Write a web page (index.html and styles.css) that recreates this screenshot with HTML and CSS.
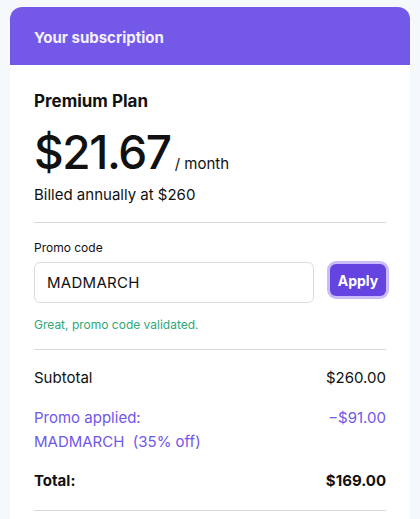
FILE: index.html
```html
<!DOCTYPE html>
<html lang="en">
<head>
  <meta charset="UTF-8">
  <meta name="viewport" content="width=device-width, initial-scale=1.0">
  <title>Your subscription</title>
  <link rel="stylesheet" href="styles.css">
</head>
<body>
  <div class="card">
    <div class="card-header">Your subscription</div>
    <div class="card-body">
      <h2 class="plan-name">Premium Plan</h2>
      <div class="price">
        <span class="amount">$21.67</span>
        <span class="period">/ month</span>
      </div>
      <p class="billed">Billed annually at $260</p>

      <hr class="divider">

      <div class="promo">
        <label class="promo-label" for="promo">Promo code</label>
        <div class="promo-row">
          <input type="text" id="promo" class="promo-input" value="MADMARCH">
          <button class="apply-button">Apply</button>
        </div>
        <p class="promo-success">Great, promo code validated.</p>
      </div>

      <hr class="divider">

      <div class="line">
        <span>Subtotal</span>
        <span>$260.00</span>
      </div>
      <div class="line discount">
        <span>Promo applied:<br>MADMARCH&nbsp; (35% off)</span>
        <span>&minus;$91.00</span>
      </div>
      <div class="line total">
        <span>Total:</span>
        <span>$169.00</span>
      </div>

      <hr class="divider">
    </div>
  </div>
</body>
</html>
```

FILE: styles.css
```css
body {
  font-family: Inter, "Noto Sans", Arial, sans-serif;
  background-color: #f5f9fb;
  margin: 0;
  padding: 7px 10px 0;
  color: #111;
}

.card {
  background-color: #fff;
  border-radius: 12px 12px 0 0;
  overflow: hidden;
}

.card-header {
  background-color: #7459e8;
  color: #f4f1ff;
  font-size: 15px;
  font-weight: 700;
  height: 58px;
  line-height: 62px;
  padding: 0 24px;
}

.card-body {
  padding: 25px 24px 10px;
}

.plan-name {
  font-size: 17px;
  font-weight: 700;
  margin: 0;
  line-height: 22px;
}

.price {
  display: flex;
  align-items: baseline;
  margin-top: 17px;
}

.amount {
  font-size: 46px;
  font-weight: 500;
  letter-spacing: -1.4px;
  line-height: 46px;
}

.period {
  font-size: 15px;
  line-height: 16px;
  margin-left: 4px;
}

.billed {
  font-size: 15px;
  margin: 10px 0 0;
  line-height: 20px;
}

.divider {
  border: none;
  border-top: 1px solid #d8d8de;
  margin: 17px 0 0;
}

.promo {
  padding-top: 17px;
}

.promo-label {
  display: block;
  font-size: 12px;
  line-height: 16px;
  margin-bottom: 6px;
}

.promo-row {
  display: flex;
  align-items: flex-start;
  gap: 16px;
}

.promo-input {
  flex: 1;
  height: 41px;
  box-sizing: border-box;
  border: 1px solid #dcdcdf;
  border-radius: 6px;
  padding: 0 12px;
  font-family: inherit;
  font-size: 15px;
  color: #111;
  letter-spacing: 0.3px;
}

.apply-button {
  margin-top: 2px;
  width: 56px;
  height: 32px;
  background-color: #6443e0;
  border: none;
  border-radius: 6px;
  box-shadow: 0 0 0 3px #c9bcf8;
  color: #fff;
  font-family: inherit;
  font-size: 14px;
  font-weight: 700;
  cursor: pointer;
  padding: 0;
}

.promo-success {
  font-size: 12px;
  color: #2ea878;
  margin: 14px 0 0;
  line-height: 16px;
}

.promo + .divider {
  margin-top: 16px;
}

.line {
  display: flex;
  justify-content: space-between;
  align-items: flex-start;
  font-size: 15px;
  line-height: 24px;
  margin-top: 16px;
}

.line.discount {
  color: #7057e8;
  margin-top: 16px;
}

.line.total {
  font-weight: 700;
  margin-top: 15px;
}

.line.total + .divider {
  margin-top: 17px;
}
```
